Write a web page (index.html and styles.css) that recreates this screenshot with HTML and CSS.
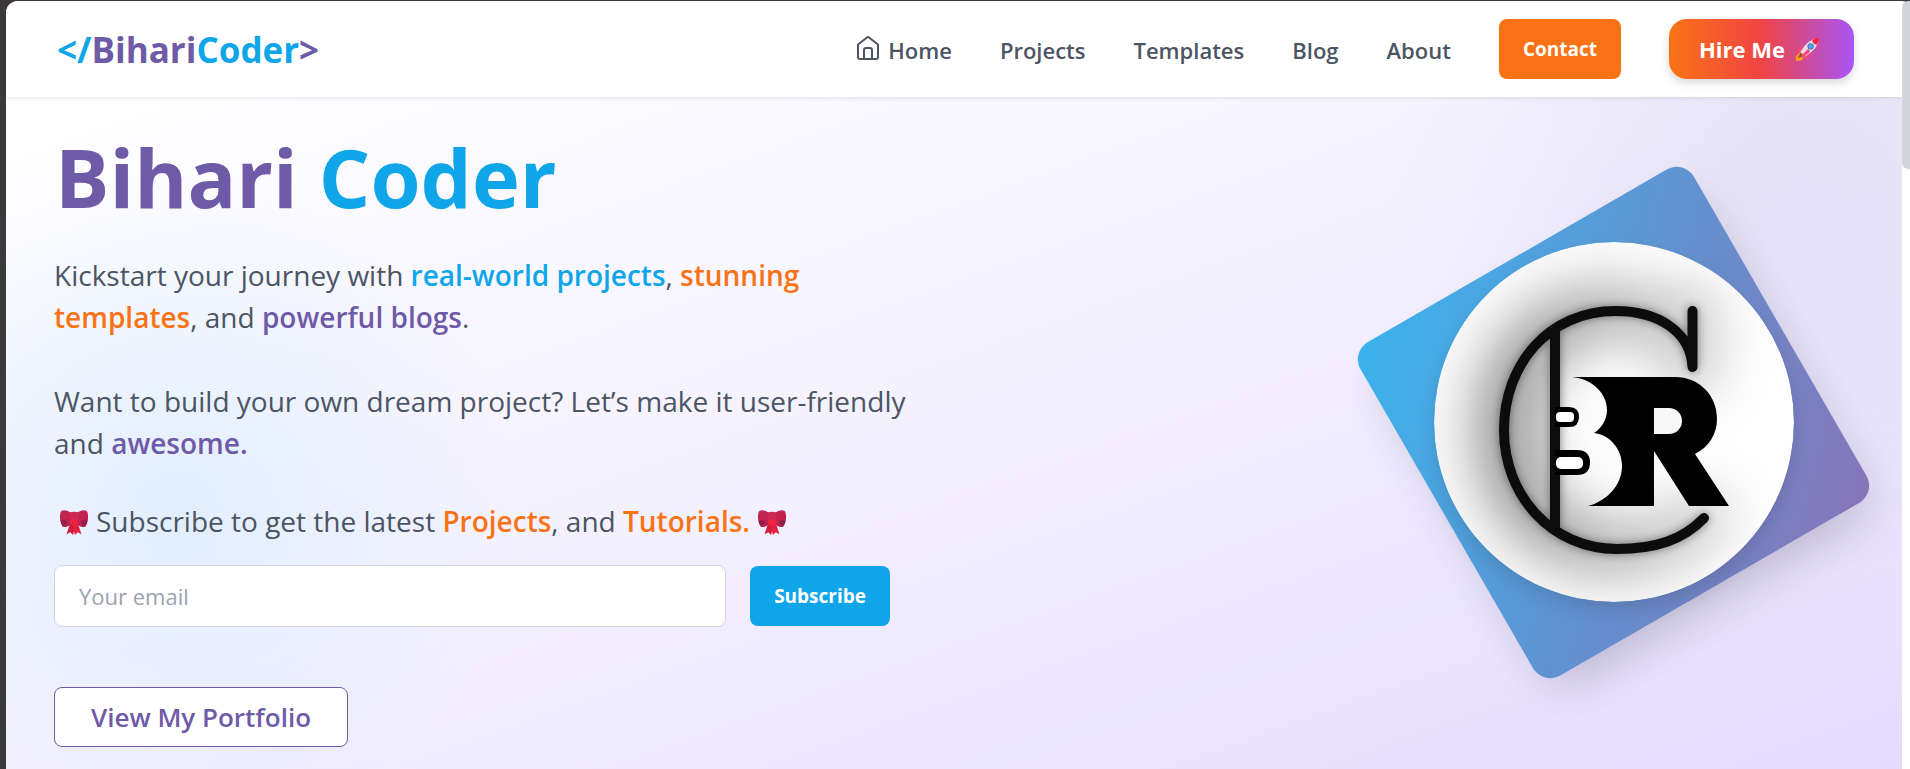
FILE: index.html
```html
<!DOCTYPE html>
<html lang="en">
<head>
<meta charset="utf-8">
<meta name="viewport" content="width=device-width, initial-scale=1">
<title>Bihari Coder</title>
<link rel="stylesheet" href="styles.css">
</head>
<body>
<svg class="defs" aria-hidden="true">
  <defs>
    <linearGradient id="ribbon" x1="0" y1="0" x2="1" y2="1">
      <stop offset="0" stop-color="#b52b52"/><stop offset=".6" stop-color="#c8204f"/><stop offset="1" stop-color="#8f2450"/>
    </linearGradient>
    <symbol id="bow" viewBox="0 0 32 32">
      <path d="M12 18 8 30l4-2 3 3 3-12z" fill="#d41a3e"/>
      <path d="M20 18l4 12-4-2-3 3-3-12z" fill="#e0203e"/>
      <path d="M14 8Q7 3 3 5 1 6 1 12t3 10q3 2 11-4z" fill="url(#ribbon)"/>
      <path d="M18 8q7-5 11-3 2 1 2 7t-3 10q-3 2-11-4z" fill="url(#ribbon)"/>
      <path d="M2 16q3-2 6 0 2 3-3 5-3-1-3-5zM30 16q-3-2-6 0-2 3 3 5 3-1 3-5z" fill="#8e2045"/>
      <path d="M11 7q5-2 10 0l-1 12q-4 2-8 0z" fill="#cc2855"/>
      <path d="M12 15q4-2 8 0v5q-4 2-8 0z" fill="#ef2340"/>
    </symbol>
    <symbol id="rocket" viewBox="0 0 32 32">
      <path d="M13 12Q5 11 2 18l6 1zM20 19q1 8-6 11l-1-6z" fill="#f8417a"/>
      <path d="M7 19 1 25v6l7-1 5-6z" fill="#f59a23"/>
      <path d="M7 20l-3 7 7-3z" fill="#8b4a2b"/>
      <path d="M31 1Q17 2 7 19l6 6Q30 15 31 1z" fill="#e5dbe9"/>
      <path d="M31 1q-5 0-9 3 1 5 6 6 3-4 3-9z" fill="#f5243f"/>
      <circle cx="20" cy="12" r="4" fill="#5c6f92"/><circle cx="20" cy="12" r="3" fill="#45a6f5"/>
      <path d="M17 15 8 24l2 3 9-8z" fill="#f8417a"/>
    </symbol>
  </defs>
</svg>
<div class="window">
  <div class="page">
    <header class="navbar">
      <a class="brand" href="#"><span class="sky">&lt;/</span><span class="violet">Bihari</span><span class="sky">Coder</span><span class="violet">&gt;</span></a>
      <nav class="menu" aria-label="Main">
        <a class="menu-link" href="#">
          <svg class="home-icon" viewBox="0 0 24 24" aria-hidden="true"><path d="M2 8.500 11 1.500q1-1 2 0l9 7V21a2 2 0 0 1-2 2H4a2 2 0 0 1-2-2zM8 23V14a2 2 0 0 1 2-2h4a2 2 0 0 1 2 2v9"/></svg>
          Home</a>
        <a class="menu-link" href="#">Projects</a>
        <a class="menu-link" href="#">Templates</a>
        <a class="menu-link" href="#">Blog</a>
        <a class="menu-link" href="#">About</a>
        <button class="btn contact" type="button">Contact</button>
        <button class="btn hire" type="button">Hire Me
          <svg class="rocket" role="img" aria-label="rocket"><use href="#rocket"/></svg></button>
      </nav>
    </header>
    <main class="hero">
      <section class="intro">
        <h1 class="title"><span class="violet">Bihari</span> <span class="sky">Coder</span></h1>
        <p class="lead">Kickstart your journey with <strong class="sky">real-world projects</strong>, <strong class="orange">stunning templates</strong>, and <strong class="violet">powerful blogs</strong>.</p>
        <p class="lead">Want to build your own dream project? Let’s make it user-friendly and <strong class="violet">awesome.</strong></p>
        <label class="lead invite" for="email"><svg class="bow" role="img" aria-label="ribbon"><use href="#bow"/></svg><span>Subscribe to get the latest <strong class="orange">Projects</strong>, and <strong class="orange">Tutorials.</strong></span><svg class="bow" role="img" aria-label="ribbon"><use href="#bow"/></svg></label>
        <form class="signup">
          <input class="email" id="email" type="email" placeholder="Your email">
          <button class="btn subscribe" type="submit">Subscribe</button>
        </form>
        <a class="portfolio" href="#">View My Portfolio</a>
      </section>
      <section class="emblem">
        <div class="tile"></div>
        <svg class="logo" viewBox="0 0 360 360" role="img" aria-label="Bihari Coder logo">
          <defs>
            <clipPath id="disc"><circle cx="180" cy="180" r="180"/></clipPath>
            <linearGradient id="paper"><stop offset="0" stop-color="#f8f8f8"/><stop offset=".75" stop-color="#fefefe"/></linearGradient>
            <linearGradient id="fade" gradientUnits="userSpaceOnUse" x1="70" y1="0" x2="290" y2="0"><stop offset="0" stop-color="#000" stop-opacity=".38"/><stop offset="1" stop-color="#000" stop-opacity=".14"/></linearGradient>
            <linearGradient id="crescent" x1="0" x2="1"><stop offset="0" stop-color="#aaa"/><stop offset="1" stop-color="#bdbdbd"/></linearGradient>
            <filter id="glow" filterUnits="userSpaceOnUse" x="-60" y="-60" width="480" height="480"><feGaussianBlur stdDeviation="24"/></filter>
            <filter id="soft" filterUnits="userSpaceOnUse" x="0" y="0" width="360" height="360"><feGaussianBlur stdDeviation="5"/></filter>
            <path id="ring" d="M258.500 69v56c-2-36-35-56-77-56C115 69 70 122 70 188s48 119 113 119c38 0 66-9 87-31"/>
          </defs>
          <g clip-path="url(#disc)">
            <rect width="360" height="360" fill="url(#paper)"/>
            <use href="#ring" class="halo" filter="url(#glow)"/>
            <path d="M121 88C89 108 70 146 70 188s20 79 51 99z" fill="url(#crescent)" opacity=".6"/>
            <g filter="url(#soft)" opacity=".45"><use href="#ring" class="stroke"/><path class="stroke" d="M121 88v199"/></g>
            <use href="#ring" class="stroke"/>
            <path class="stroke" d="M121 88v199"/>
            <path d="M138 135h103c25 0 42 19 42 42 0 15-8 28-22 35l34 52h-40l-35-55v55h-66c19-5 34-21 34-40 0-17-12-31-28-33 8-5 13-14 13-23 0-17-15-31-35-33z" fill="#000"/>
            <path d="M220 166h15a13 13 0 0 1 0 26h-15z" fill="#f8f8f8"/>
            <path d="M121 165h14q10 0 10 10t-10 10h-14zM121 208h22q13 0 13 12.500t-13 12.500h-22z" fill="#000"/>
            <rect x="122" y="170" width="18" height="10" rx="4" fill="#fff"/>
            <rect x="122" y="215" width="27" height="12" rx="5" fill="#fff"/>
          </g>
        </svg>
      </section>
    </main>
  </div>
  <div class="scrollbar" aria-hidden="true"><div class="thumb"></div></div>
</div>
</body>
</html>
```
FILE: styles.css
```css
* { box-sizing: border-box; }

body {
  margin: 0;
  background: #3b3939;
  color: #4b5563;
  font-family: "Open Sans", "Noto Sans", sans-serif;
}

a { text-decoration: none; color: inherit; }
.defs { position: absolute; width: 0; height: 0; }
.sky { color: #0ea5e9; }
.violet { color: #6f5aa7; }
.orange { color: #f97316; }

.window {
  display: flex;
  min-height: 100vh;
  padding: 1px 0 0 6px;
}

.page {
  flex: 1;
  display: flex;
  flex-direction: column;
  overflow: hidden;
  border-top-left-radius: 12px;
  background: #fff;
}

.scrollbar { width: 8px; background: #fff; border-top-right-radius: 8px; }
.thumb { height: 168px; border-radius: 6px 0 0 6px; background: #d1d5db; }

.navbar {
  display: flex;
  align-items: center;
  justify-content: space-between;
  height: 96px;
  padding: 0 48px;
  background: #fff;
  box-shadow: 0 1px 4px rgba(0, 0, 0, .1);
  position: relative;
}

.brand { padding: 2px 0 0 3px; font-size: 35px; font-weight: 700; line-height: 48px; }
.menu { display: flex; align-items: center; gap: 48px; }
.menu-link {
  display: flex;
  align-items: center;
  gap: 8px;
  padding-top: 2px;
  font-size: 22px;
  font-weight: 600;
  line-height: 32px;
}
.home-icon {
  width: 24px;
  height: 24px;
  margin-bottom: 4px;
  fill: none;
  stroke: currentColor;
  stroke-width: 2;
  stroke-linejoin: round;
}

.btn {
  height: 60px;
  border: 0;
  border-radius: 8px;
  color: #fff;
  font-family: inherit;
  font-weight: 700;
  cursor: pointer;
}
.contact { padding: 0 24px; background: #f97316; font-size: 19px; }
.hire {
  display: flex;
  align-items: center;
  gap: 10px;
  padding: 0 34px 0 30px;
  border-radius: 18px;
  background: linear-gradient(90deg, #f97316, #ef4444, #a855f7);
  box-shadow: 0 4px 8px rgba(0, 0, 0, .15);
  font-size: 22px;
}
.rocket { width: 25px; height: 25px; }

.hero {
  flex: 1;
  display: grid;
  grid-template-columns: 1fr 1fr;
  gap: 48px;
  padding: 30px 48px 22px;
  background:
    radial-gradient(circle 340px at 170px 410px, rgba(205, 232, 252, .5), rgba(205, 232, 252, 0)),
    radial-gradient(circle 400px at calc(100% - 110px) 80px, rgba(205, 202, 230, .38), rgba(205, 202, 230, 0)),
    linear-gradient(to bottom right, #fff, #f5f2ff 45%, #e4dcff);
}

.intro { display: flex; flex-direction: column; align-items: flex-start; }
.title {
  margin: 0 0 29px;
  padding: 2px 0 0 1px;
  font-size: 81px;
  font-weight: 700;
  line-height: 96px;
}
.lead { margin: 0 0 42px; font-size: 28px; line-height: 42px; }
.lead strong { font-weight: 600; }
.invite { display: flex; align-items: center; gap: 6px; margin: -6px 0 23px; padding-left: 4px; }
.bow { width: 32px; height: 30px; }

.signup { display: flex; align-items: center; gap: 24px; margin: 0 0 60px; width: 836px; max-width: 100%; }
.email {
  flex: 1;
  min-width: 0;
  height: 62px;
  padding: 0 24px;
  border: 1px solid #d1d5db;
  border-radius: 8px;
  background: #fff;
  color: #4b5563;
  font-family: inherit;
  font-size: 22px;
}
.email::placeholder { color: #9ca3af; }
.subscribe { padding: 0 24px; background: #0ea5e9; font-size: 19px; }
.portfolio {
  padding: 0 36px;
  border: 1px solid #6f5aa7;
  border-radius: 8px;
  background: #fff;
  color: #6f5aa7;
  font-size: 26px;
  font-weight: 600;
  line-height: 58px;
}

.emblem { display: grid; place-items: center; align-self: center; justify-self: end; padding-right: 48px; margin-bottom: 30px; }
.tile, .logo { grid-area: 1 / 1; }
.tile {
  width: 385px;
  height: 385px;
  border-radius: 20px;
  background: linear-gradient(to bottom right, #0ea5e9, #6f5aa7);
  box-shadow: 0 25px 50px -12px rgba(0, 0, 0, .25);
  opacity: .8;
  transform: rotate(-30deg);
}
.logo { width: 360px; height: 360px; border-radius: 50%; box-shadow: 0 10px 20px -3px rgba(0, 0, 0, .15); position: relative; }
.stroke, .halo { fill: none; stroke: #0c0c0c; stroke-width: 10; stroke-linecap: round; stroke-linejoin: round; }
.halo { stroke: url(#fade); stroke-width: 60; }
```
